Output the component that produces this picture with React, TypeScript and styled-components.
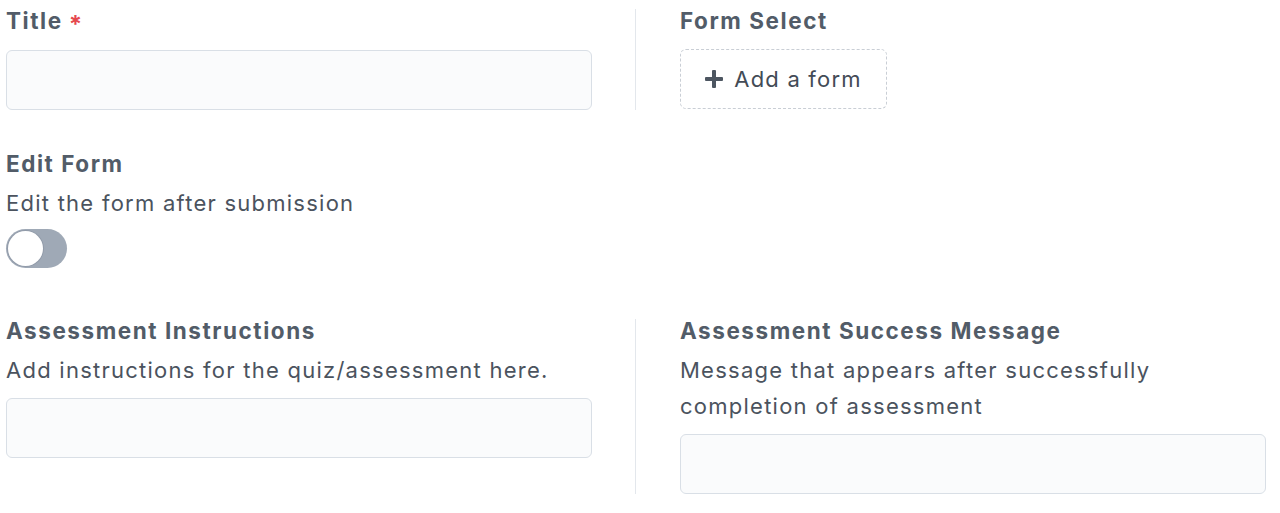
import { useState } from "react";
import styled, { createGlobalStyle } from "styled-components";

const GlobalStyle = createGlobalStyle`
  body {
    margin: 0;
    background: #ffffff;
    font-family: Inter, "Noto Sans", sans-serif;
    -webkit-font-smoothing: antialiased;
  }
`;

const Page = styled.div`
  padding: 9px 14px 0 6px;
  display: flex;
  flex-direction: column;
  gap: 42px;
`;

const Row = styled.div`
  display: grid;
  grid-template-columns: 586px 631px;
  column-gap: 43px;
`;

const Field = styled.div<{ divided?: boolean }>`
  display: flex;
  flex-direction: column;
  ${({ divided }) =>
    divided &&
    `
    border-left: 1px solid #e3e7ec;
    padding-left: 44px;
  `}
`;

const Label = styled.label`
  font-size: 22.5px;
  line-height: 24px;
  font-weight: 700;
  letter-spacing: 1.55px;
  color: #525c68;
  margin-bottom: 9px;
`;

const Required = styled.span`
  color: #e5484f;
  font-size: 24px;
  margin-left: 6px;
  position: relative;
  top: 4px;
`;

const Hint = styled.p`
  margin: 0 0 2px;
  font-size: 22px;
  line-height: 36px;
  letter-spacing: 1.25px;
  color: #4b535e;
`;

const Input = styled.input`
  box-sizing: border-box;
  margin-top: 8px;
  height: 60px;
  width: 100%;
  border: 1px solid #d9dfe6;
  border-radius: 6px;
  background: #fafbfc;
  font: inherit;
  font-size: 22px;
  padding: 0 16px;
  outline: none;
`;

const AddButton = styled.button`
  box-sizing: border-box;
  margin-top: 7px;
  width: 207px;
  height: 60px;
  display: flex;
  align-items: center;
  justify-content: center;
  gap: 11px;
  border: 1px dashed #c9ced5;
  border-radius: 6px;
  background: #ffffff;
  font-family: inherit;
  font-size: 22px;
  letter-spacing: 1.2px;
  color: #434b56;
  cursor: pointer;
`;

const Track = styled.button<{ on: boolean }>`
  margin-top: 6px;
  margin-bottom: 9px;
  width: 61px;
  height: 39px;
  border: none;
  border-radius: 20px;
  padding: 2px;
  display: flex;
  justify-content: ${({ on }) => (on ? "flex-end" : "flex-start")};
  background: ${({ on }) => (on ? "#3b82f6" : "#9fa9b6")};
  cursor: pointer;
`;

const Knob = styled.span`
  width: 35px;
  height: 35px;
  border-radius: 50%;
  background: #ffffff;
  box-shadow: 0 0 0 1px rgba(120, 130, 145, 0.35);
`;

const PlusIcon = () => (
  <svg width="18" height="18" viewBox="0 0 18 18" fill="#4d5661">
    <rect x="7" y="0" width="4" height="18" rx="1" />
    <rect x="0" y="7" width="18" height="4" rx="1" />
  </svg>
);

export default function App() {
  const [editable, setEditable] = useState(false);

  return (
    <>
      <GlobalStyle />
      <Page>
        <Row>
          <Field>
            <Label>
              Title<Required>*</Required>
            </Label>
            <Input />
          </Field>
          <Field divided>
            <Label>Form Select</Label>
            <AddButton>
              <PlusIcon />
              Add a form
            </AddButton>
          </Field>
        </Row>

        <Row>
          <Field>
            <Label>Edit Form</Label>
            <Hint>Edit the form after submission</Hint>
            <Track on={editable} onClick={() => setEditable(!editable)}>
              <Knob />
            </Track>
          </Field>
        </Row>

        <Row>
          <Field>
            <Label>Assessment Instructions</Label>
            <Hint>Add instructions for the quiz/assessment here.</Hint>
            <Input />
          </Field>
          <Field divided>
            <Label>Assessment Success Message</Label>
            <Hint>
              Message that appears after successfully
              <br />
              completion of assessment
            </Hint>
            <Input />
          </Field>
        </Row>
      </Page>
    </>
  );
}
